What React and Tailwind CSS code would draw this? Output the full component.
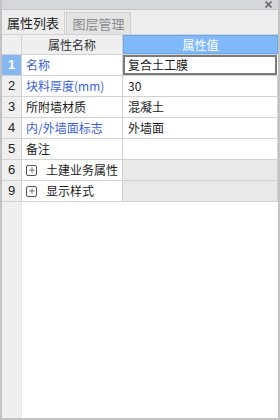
import { Plus } from "lucide-react"

const rows = [
	{ no: "1", name: "名称", value: "复合土工膜", blue: true, selected: true },
	{ no: "2", name: "块料厚度(mm)", value: "30", blue: true },
	{ no: "3", name: "所附墙材质", value: "混凝土" },
	{ no: "4", name: "内/外墙面标志", value: "外墙面", blue: true },
	{ no: "5", name: "备注", value: "" },
	{ no: "6", name: "土建业务属性", group: true },
	{ no: "9", name: "显示样式", group: true },
]

const GroupBox = () => (
	<span className="w-[11px] h-[11px] border border-[#555] rounded-[2px] flex items-center justify-center mr-[9px]">
		<Plus size={8} strokeWidth={2} className="text-[#333]" />
	</span>
)

const App = () => {
	return (
		<div
			className="w-[280px] h-[420px] bg-white flex flex-col border-x-2 border-b-2 border-[#c3c3c3] overflow-hidden text-[12px] text-[#1a1a1a]"
			style={{ fontFamily: '"Noto Sans CJK SC", "Noto Sans", sans-serif' }}
		>
			<div className="h-[10px] bg-[#d6d7dc] flex justify-end items-center pr-[6px] border-b border-[#c4c5ca]">
				<svg width="7" height="7" viewBox="0 0 7 7">
					<path d="M0.5 0.5L6.5 6.5M6.5 0.5L0.5 6.5" stroke="#6a6a6a" strokeWidth="1.6" />
				</svg>
			</div>
			<div className="h-[24px] bg-[#ededed] flex items-end">
				<div className="w-[63px] h-[23px] flex items-center justify-center text-[13px] text-[#222] border-r border-[#d0d0d0]">
					属性列表
				</div>
				<div className="w-[65px] h-[22px] bg-[#e3e3e3] border border-b-0 border-[#d0d0d0] ml-px flex items-center justify-center text-[13px] text-[#8a8a8a]">
					图层管理
				</div>
			</div>
			<div className="flex h-[21px] border-y border-[#d2d2d2]">
				<div className="w-[20px] bg-[#efefef] border-r border-[#d2d2d2]" />
				<div className="w-[101px] bg-[#efefef] border-r border-[#d2d2d2] flex items-center justify-center text-[#333]">
					属性名称
				</div>
				<div className="flex-1 bg-[#80b9f9] border border-[#6aa4ea] flex items-center justify-center text-white">
					属性值
				</div>
			</div>
			{rows.map((r) => (
				<div key={r.no} className="flex h-[21px] border-b border-[#d2d2d2]">
					<div
						className={`w-[20px] border-r border-[#d2d2d2] flex items-center justify-center text-[13px] ${
							r.selected ? "bg-[#86b8f2] text-white font-bold" : "bg-[#efefef] text-[#222]"
						}`}
						style={{ fontFamily: '"Liberation Sans", sans-serif' }}
					>
						{r.no}
					</div>
					<div
						className={`w-[101px] border-r border-[#d2d2d2] flex items-center pl-[4px] ${
							r.blue ? "text-[#3b5fe0]" : "text-[#1a1a1a]"
						}`}
					>
						{r.group && <GroupBox />}
						{r.name}
					</div>
					{r.selected ? (
						<div className="flex-1 border-2 border-[#7a7a7a] flex items-center pl-[3px] mr-px">
							{r.value}
						</div>
					) : (
						<div
							className={`flex-1 flex items-center pl-[5px] border-r border-[#d2d2d2] ${
								r.group ? "bg-[#e9e9e9]" : "bg-white"
							}`}
						>
							{r.value}
						</div>
					)}
				</div>
			))}
			<div className="flex-1 flex">
				<div className="w-[20px] bg-[#efefef] border-r border-[#e6e6e6]" />
				<div className="flex-1" />
			</div>
		</div>
	)
}

export default App
